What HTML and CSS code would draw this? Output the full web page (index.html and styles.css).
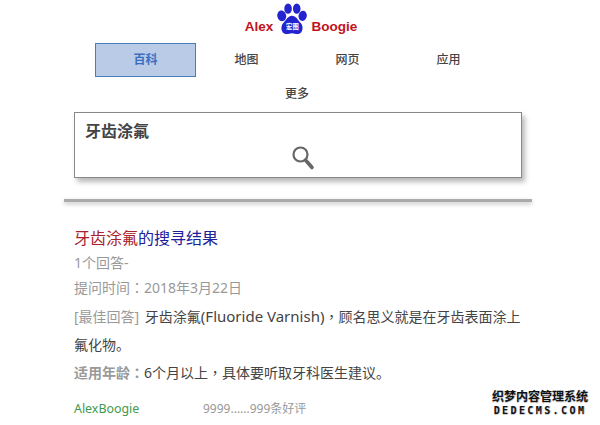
FILE: index.html
```html
<!DOCTYPE html>
<html lang="zh">
<head>
<meta charset="utf-8">
<title>牙齿涂氟</title>
<link rel="stylesheet" href="styles.css">
</head>
<body>
<div class="page">
  <header class="logo">
    <span class="logo-text">Alex</span>
    <svg class="paw" width="30" height="32" viewBox="0 0 38 40" aria-hidden="true">
      <ellipse cx="6" cy="16" rx="5.6" ry="6.800" transform="rotate(-12 6 16)" fill="#2323d0"/>
      <ellipse cx="14" cy="7" rx="4.800" ry="6.500" fill="#2323d0"/>
      <ellipse cx="25" cy="7" rx="4.800" ry="6.500" fill="#2323d0"/>
      <ellipse cx="32.500" cy="16" rx="5.200" ry="6.500" transform="rotate(12 32.500 16)" fill="#2323d0"/>
      <path d="M19 16c5 0 7 5 11 9 4 4 3 13-3 14-3 .4-5-1-8-1s-5 1.400-8 1C5 38 4 29 8 25c4-4 6-9 11-9z" fill="#2323d0"/>
      <text x="19.500" y="33" class="paw-text">宏图</text>
    </svg>
    <span class="logo-text">Boogie</span>
  </header>
  <nav class="tabs">
    <a class="tab active">百科</a>
    <a class="tab">地图</a>
    <a class="tab">网页</a>
    <a class="tab">应用</a>
    <a class="tab">更多</a>
  </nav>
  <section class="search">
    <div class="query">牙齿涂氟</div>
    <svg class="lens" width="24" height="26" viewBox="0 0 24 26" aria-hidden="true">
      <circle cx="9.500" cy="9.500" r="7" fill="none" stroke="#666" stroke-width="2.200"/>
      <path d="M14.500 15l6.500 7.500" stroke="#666" stroke-width="3.600" stroke-linecap="round"/>
    </svg>
  </section>
  <div class="rule"></div>
  <main class="result">
    <h1 class="title"><span class="hit">牙齿涂氟</span>的搜寻结果</h1>
    <p class="meta">1个回答-</p>
    <p class="meta">提问时间<span class="tc" lang="zh-TW">：</span>2018年3月22日</p>
    <p class="answer"><span class="label">[最佳回答]</span> 牙齿涂氟<span class="latin">(Fluoride Varnish)</span><span class="tc" lang="zh-TW">，</span>顾名思义就是在牙齿表面涂上氟化物。</p>
    <p class="age"><b class="age-label">适用年龄<span class="tc" lang="zh-TW">：</span></b>6个月以上<span class="tc" lang="zh-TW">，</span>具体要听取牙科医生建议。</p>
    <div class="foot"><span class="author">AlexBoogie</span><span class="rating">9999......999条好评</span></div>
  </main>
  <div class="mark"><div class="mark-cn">织梦内容管理系统</div><div class="mark-en">DEDECMS.COM</div></div>
</div>
</body>
</html>
```
FILE: styles.css
```css
* { box-sizing: border-box; }
html, body { margin: 0; padding: 0; background: #fff; }
body {
  width: 600px;
  height: 425px;
  overflow: hidden;
  font-family: "Noto Sans", "Noto Sans CJK SC", sans-serif;
}
.page { position: relative; width: 600px; height: 425px; padding-top: 3px; }
.logo {
  display: flex;
  justify-content: center;
  align-items: center;
  gap: 4px;
  height: 32px;
  margin-left: 1px;
  width: 600px;
}
.logo-text {
  font-family: "Liberation Sans", sans-serif;
  font-weight: 700;
  font-size: 13.500px;
  color: #c2121c;
  margin-top: 15px;
  line-height: 20px;
}
.paw { display: block; }
.paw-text {
  font-family: "Noto Sans CJK SC", sans-serif;
  font-size: 8px;
  font-weight: 700;
  fill: #fff;
  text-anchor: middle;
}
.tabs {
  display: grid;
  grid-template-columns: repeat(4, 101px);
  margin: 8px 0 0 95px;
  width: 404px;
}
.tab {
  height: 34px;
  line-height: 32px;
  text-align: center;
  font-size: 12px;
  font-weight: 500;
  color: #444;
  border: 1px solid transparent;
}
.tab.active {
  background: #b9cbe6;
  border-color: #4a7cb8;
  color: #3a6fc0;
  font-weight: 700;
}
.tab:last-child { grid-column: 2 / span 2; }
.search {
  display: flex;
  flex-direction: column;
  align-items: center;
  width: 448px;
  height: 66px;
  margin: 1px 0 0 74px;
  border: 1px solid #888;
  box-shadow: 3px 4px 5px rgba(0,0,0,.28);
  background: #fff;
}
.query {
  align-self: flex-start;
  margin: 7px 0 0 10px;
  font-size: 16px;
  line-height: 22px;
  font-weight: 700;
  color: #444;
}
.lens { margin: 3px 0 0 10px; }
.rule {
  width: 468px;
  height: 3px;
  margin: 21px 0 0 64px;
  background: #aaa;
  box-shadow: 0 2px 4px rgba(0,0,0,.25);
}
.result { margin: 0 0 0 74px; width: 450px; padding-top: 25px; }
.title {
  margin: 0 0 1px;
  font-size: 16px;
  line-height: 22px;
  font-weight: 400;
  color: #20209a;
}
.hit { color: #a8212c; }
p { margin: 0; }
.tc { font-family: "Noto Sans CJK TC", sans-serif; }
.meta { font-size: 14px; line-height: 25px; color: #999; }
.answer { font-size: 14px; line-height: 28px; color: #444; margin-top: 2px; }
.label { color: #999; margin-right: 2px; }
.latin { font-size: 15px; line-height: 20px; }
.age { font-size: 14px; line-height: 28px; color: #444; margin-top: -1px; }
.age-label { color: #999; font-weight: 700; }
.foot { display: flex; font-size: 12px; line-height: 20px; margin-top: 12px; }
.author { width: 129px; color: #3f9a4c; font-size: 12.400px; }
.rating { color: #999; }
.mark {
  position: absolute;
  left: 490px;
  top: 390px;
  width: 100px;
  text-align: center;
  color: #111;
  font-weight: 700;
  text-shadow: 1px 0 0 #ccc, 0 1px 0 #ccc;
}
.mark-cn { font-size: 12px; line-height: 14px; }
.mark-en { font-family: "DejaVu Sans Mono", monospace; font-size: 10px; line-height: 12px; letter-spacing: 2.400px; margin-top: 1px; }
```
